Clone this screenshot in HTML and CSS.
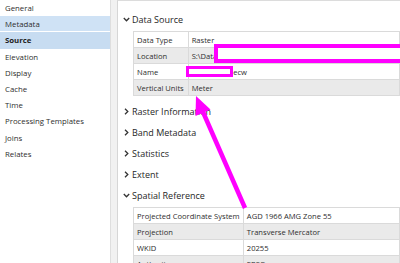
FILE: index.html
```html
<!DOCTYPE html>
<html lang="en">

<head>
    <link rel="stylesheet" href="styles.css">
</head>

<body>
    <div class="window">
        <nav class="sidebar">
            <div class="nav-item">General</div>
            <div class="nav-item hover">Metadata</div>
            <div class="nav-item selected">Source</div>
            <div class="nav-item">Elevation</div>
            <div class="nav-item">Display</div>
            <div class="nav-item">Cache</div>
            <div class="nav-item">Time</div>
            <div class="nav-item">Processing Templates</div>
            <div class="nav-item">Joins</div>
            <div class="nav-item">Relates</div>
        </nav>
        <div class="gutter"></div>
        <main class="content">
            <section class="group">
                <div class="group-head">
                    <svg class="chev" viewBox="0 0 7 7"><path d="M0.8 2 L3.5 4.8 L6.2 2" /></svg>
                    Data Source
                </div>
                <table class="props props-source">
                    <tr><td>Data Type</td><td>Raster</td></tr>
                    <tr><td>Location</td><td>S:\Data</td></tr>
                    <tr><td>Name</td><td><span class="hidden-name">.ecw</span></td></tr>
                    <tr><td>Vertical Units</td><td>Meter</td></tr>
                </table>
            </section>
            <div class="group-head">
                <svg class="chev" viewBox="0 0 7 7"><path d="M2 0.8 L4.8 3.5 L2 6.2" /></svg>
                Raster Information
            </div>
            <div class="group-head">
                <svg class="chev" viewBox="0 0 7 7"><path d="M2 0.8 L4.8 3.5 L2 6.2" /></svg>
                Band Metadata
            </div>
            <div class="group-head">
                <svg class="chev" viewBox="0 0 7 7"><path d="M2 0.8 L4.8 3.5 L2 6.2" /></svg>
                Statistics
            </div>
            <div class="group-head">
                <svg class="chev" viewBox="0 0 7 7"><path d="M2 0.8 L4.8 3.5 L2 6.2" /></svg>
                Extent
            </div>
            <section class="group">
                <div class="group-head">
                    <svg class="chev" viewBox="0 0 7 7"><path d="M0.8 2 L3.5 4.8 L6.2 2" /></svg>
                    Spatial Reference
                </div>
                <table class="props props-spatial">
                    <tr><td>Projected Coordinate System</td><td>AGD 1966 AMG Zone 55</td></tr>
                    <tr><td>Projection</td><td>Transverse Mercator</td></tr>
                    <tr><td>WKID</td><td>20255</td></tr>
                    <tr><td>Authority</td><td>EPSG</td></tr>
                </table>
            </section>
        </main>
    </div>

    <!-- annotation drawn over the screenshot -->
    <div class="mark mark-location"></div>
    <div class="mark mark-name"></div>
    <svg class="arrow" viewBox="0 0 400 263">
        <line x1="245" y1="208" x2="203" y2="112" />
        <polygon points="196,96 210.5,109.5 195.5,116" />
    </svg>
</body>

</html>
```

FILE: styles.css
```css
body {
    font-family: "Open Sans", "Noto Sans", sans-serif;
    background-color: #FFFFFF;
    margin: 0;
    padding: 0;
    height: 263px;
    overflow: hidden;
    position: relative;
}

.window {
    display: flex;
    height: 263px;
}

.sidebar {
    flex: none;
    width: 110px;
    border-right: 1px solid #DEDEDE;
}

.nav-item {
    height: 16.2px;
    line-height: 16px;
    padding-left: 5px;
    font-size: 7.8px;
    color: #2E2E2E;
    white-space: nowrap;
}

.nav-item.hover {
    background-color: #CFE2F5;
    box-shadow: 0 -1px 0 0 #FFFFFF inset;
}

.nav-item.selected {
    background-color: #C7DCF1;
    font-weight: bold;
    color: #1E1E1E;
}

.gutter {
    flex: none;
    width: 6px;
    background-color: #F1F1F1;
}

.content {
    flex: 1;
    min-width: 0;
    border-left: 1px solid #D6D6D6;
    border-top: 1px solid #DCDCDC;
    padding-top: 8px;
}

.group-head {
    display: flex;
    align-items: center;
    height: 21px;
    padding-left: 5px;
    font-size: 9px;
    color: #262626;
    white-space: nowrap;
}

.chev {
    width: 7px;
    height: 7px;
    margin-right: 2px;
    fill: none;
    stroke: #333333;
    stroke-width: 1.3;
}

.props {
    border-collapse: collapse;
    margin: 1px 0 5px 15px;
    font-size: 7.6px;
    color: #2E2E2E;
    white-space: nowrap;
}

.props td {
    height: 15px;
    padding: 0 3px;
    border: 1px solid #DADADA;
}

.props tr:nth-child(even) td {
    background-color: #EAEAEA;
}

.props-source td:first-child {
    width: 48px;
}

.props-source td:last-child {
    width: 260px;
}

.props-spatial td:first-child {
    width: 103px;
}

.props-spatial td:last-child {
    width: 200px;
}

.hidden-name {
    padding-left: 39.5px;
}

.mark {
    position: absolute;
    background-color: #FFFFFF;
    border: 4px solid #FF00FF;
}

.mark-location {
    left: 214px;
    top: 44px;
    width: 200px;
    height: 11px;
}

.mark-name {
    left: 186px;
    top: 66px;
    width: 41px;
    height: 5px;
    border-width: 3px;
}

.arrow {
    position: absolute;
    left: 0;
    top: 0;
    width: 400px;
    height: 263px;
}

.arrow line {
    stroke: #FF00FF;
    stroke-width: 4.5;
}

.arrow polygon {
    fill: #FF00FF;
}
```
